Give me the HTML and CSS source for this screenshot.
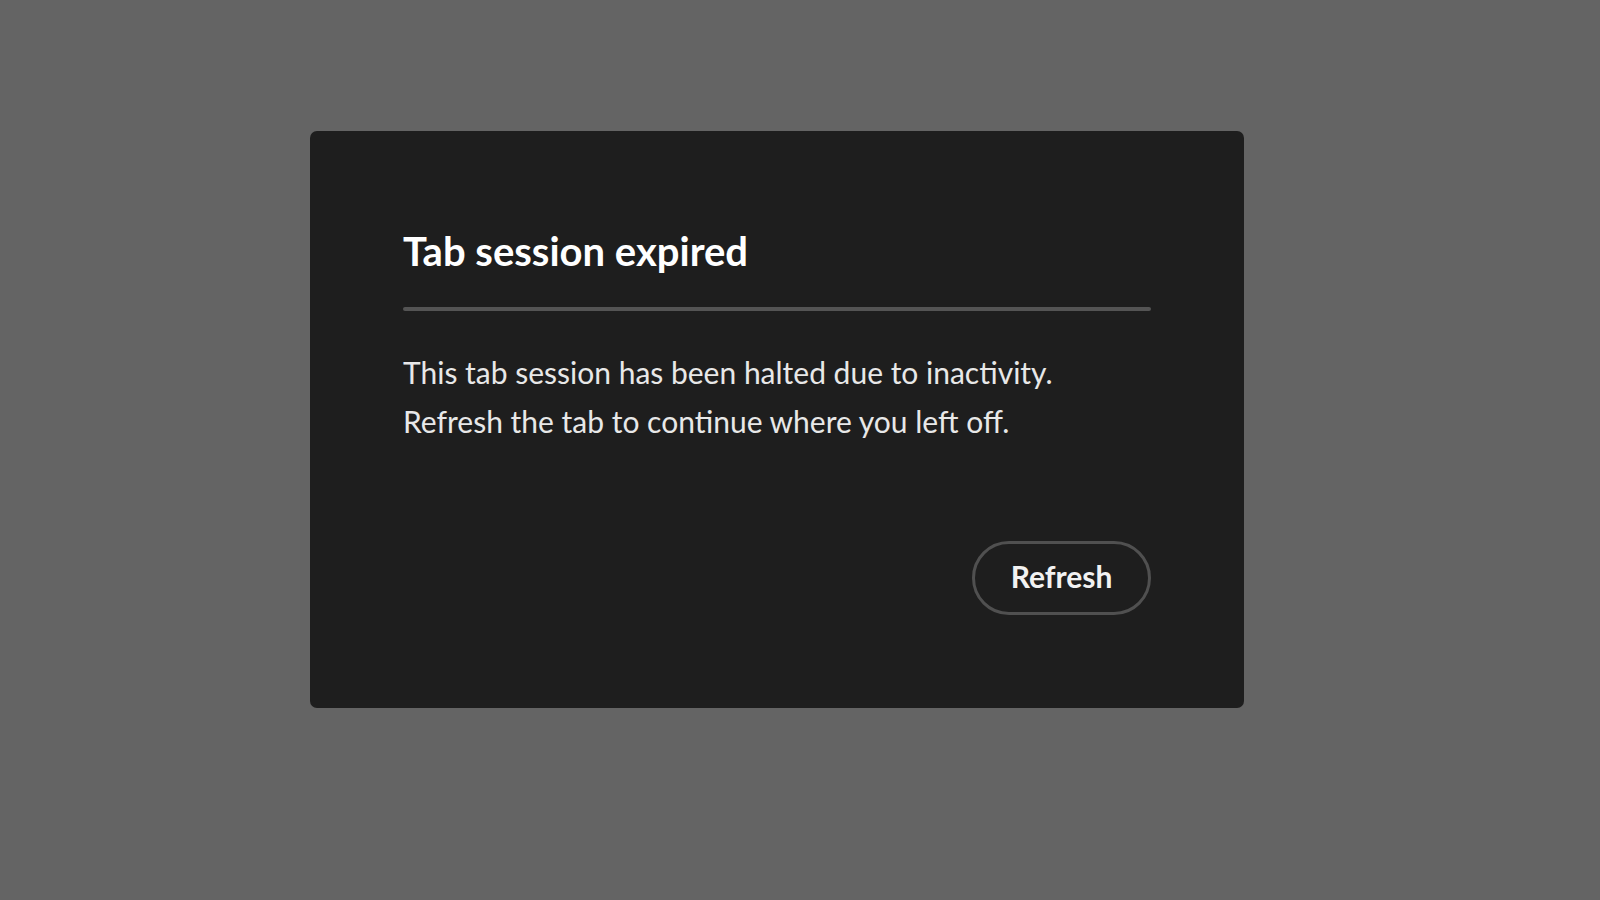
FILE: index.html
```html
<!DOCTYPE html>
<html lang="en">
<head>
    <meta charset="UTF-8">
    <title>Tab session expired</title>
    <link rel="stylesheet" href="styles.css">
</head>
<body>
    <div class="dialog">
        <h1 class="dialog-title">Tab session expired</h1>
        <div class="divider"></div>
        <p class="dialog-text">This tab session has been halted due to inactivity.<br>Refresh the tab to continue where you left off.</p>
        <div class="actions">
            <button class="refresh-btn" onclick="location.reload()">Refresh</button>
        </div>
    </div>
</body>
</html>
```
FILE: styles.css
```css
body {
    margin: 0;
    height: 100vh;
    background-color: #646464;
    font-family: Lato, "Open Sans", sans-serif;
    overflow: hidden;
}
.dialog {
    box-sizing: border-box;
    width: 934px;
    height: 577px;
    margin: 131px 0 0 310px;
    padding: 96px 93px 93px;
    background: #1e1e1e;
    border-radius: 7px;
    display: flex;
    flex-direction: column;
}
.dialog-title {
    margin: 0;
    font-size: 40px;
    line-height: 48px;
    font-weight: 700;
    color: #ffffff;
}
.divider {
    height: 4px;
    margin-top: 32px;
    background: #545454;
    border-radius: 2px;
}
.dialog-text {
    margin: 37px 0 0;
    font-size: 30px;
    line-height: 49px;
    color: #e8e8e8;
}
.actions {
    margin-top: auto;
    display: flex;
    justify-content: flex-end;
}
.refresh-btn {
    box-sizing: border-box;
    width: 179px;
    height: 74px;
    padding: 0 0 4px;
    background: transparent;
    border: 3px solid #505050;
    border-radius: 37px;
    color: #f2f2f2;
    font-family: Lato, "Open Sans", sans-serif;
    font-size: 30px;
    font-weight: 700;
    cursor: pointer;
}
.refresh-btn:hover {
    background-color: #2a2a2a;
}
```
